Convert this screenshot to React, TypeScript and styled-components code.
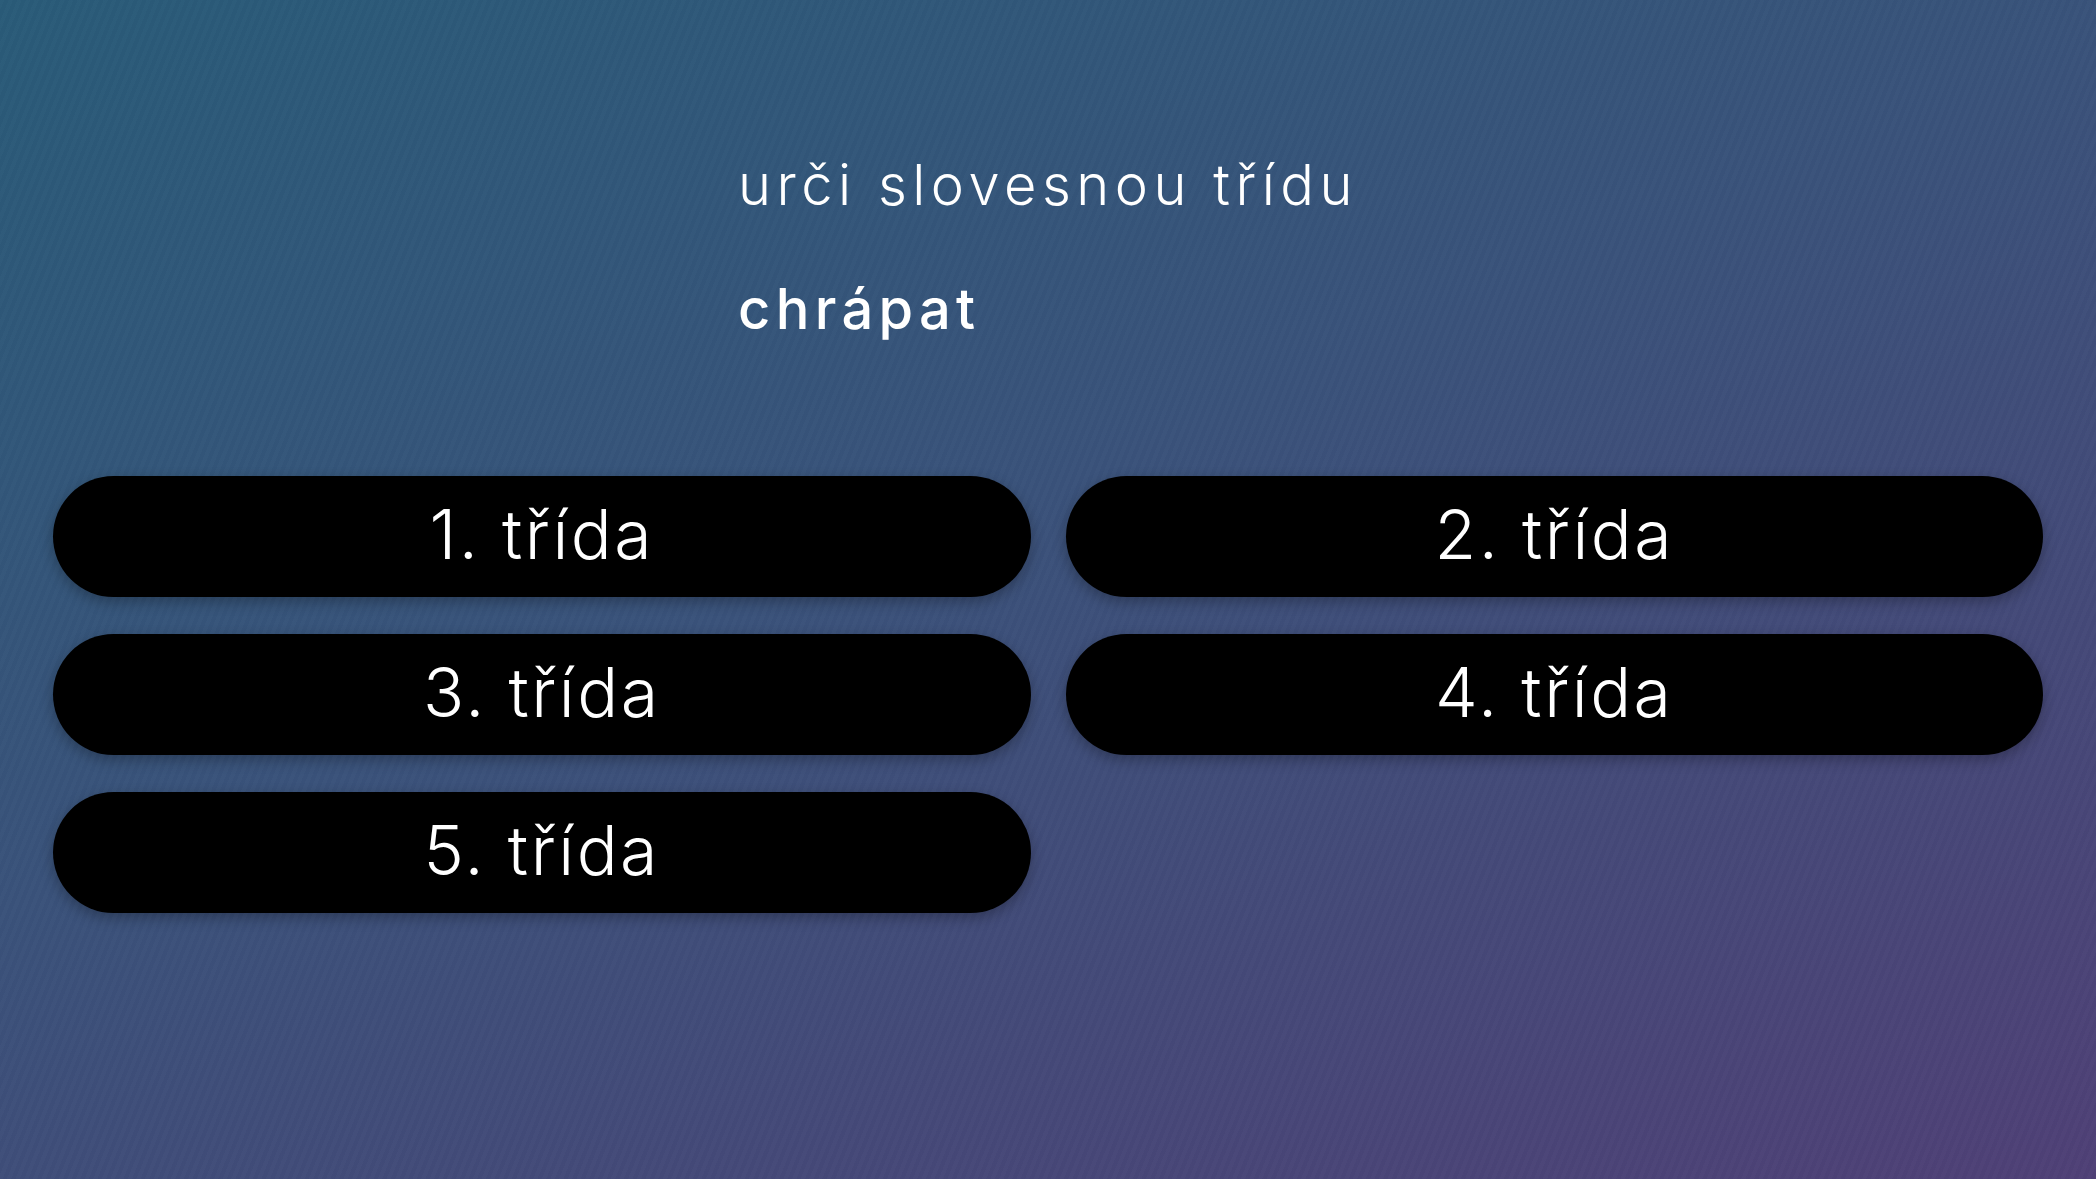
import React from "react";
import styled, { createGlobalStyle } from "styled-components";

const Global = createGlobalStyle`
  html, body { margin: 0; padding: 0; }
  body { font-family: "Inter", "Noto Sans", sans-serif; }
  * { box-sizing: border-box; }
`;

const Page = styled.div`
  width: 100%;
  min-height: 100vh;
  height: 1179px;
  overflow: hidden;
  padding-top: 151px;
  background:
    repeating-linear-gradient(
      112deg,
      rgba(255, 255, 255, 0.01) 0px,
      rgba(255, 255, 255, 0.01) 4px,
      rgba(0, 0, 0, 0.012) 4px,
      rgba(0, 0, 0, 0.012) 8px
    ),
    linear-gradient(158deg, #295b78 0%, #3a527a 45%, #4f4076 100%);
  color: #ffffff;
`;

const Header = styled.div`
  width: fit-content;
  margin: 0 auto;
  display: flex;
  flex-direction: column;
  align-items: flex-start;
`;

const Instruction = styled.div`
  font-family: "Inter", "Noto Sans", sans-serif;
  font-weight: 300;
  font-size: 56px;
  line-height: 68px;
  letter-spacing: 5.5px;
`;

const Word = styled.div`
  margin-top: 56px;
  font-family: "Inter", "Noto Sans", sans-serif;
  font-weight: 500;
  font-size: 56px;
  line-height: 68px;
  letter-spacing: 5.3px;
`;

const Options = styled.div`
  margin-top: 133px;
  padding: 0 53px;
  display: grid;
  grid-template-columns: 1fr 1fr;
  column-gap: 35px;
  row-gap: 37px;
`;

const Option = styled.button`
  height: 121px;
  border: none;
  border-radius: 61px;
  background: #000000;
  color: #ffffff;
  font-family: "Inter", "Noto Sans", sans-serif;
  font-weight: 300;
  font-size: 68px;
  letter-spacing: 2.5px;
  display: flex;
  align-items: center;
  justify-content: center;
  padding: 0 0 6px 0;
  cursor: pointer;
  box-shadow: 0 5px 14px rgba(0, 0, 0, 0.28);
`;

const options = ["1. třída", "2. třída", "3. třída", "4. třída", "5. třída"];

export default function App() {
  return (
    <>
      <Global />
      <Page>
        <Header>
          <Instruction>urči slovesnou třídu</Instruction>
          <Word>chrápat</Word>
        </Header>
        <Options>
          {options.map((o) => (
            <Option key={o}>{o}</Option>
          ))}
        </Options>
      </Page>
    </>
  );
}
